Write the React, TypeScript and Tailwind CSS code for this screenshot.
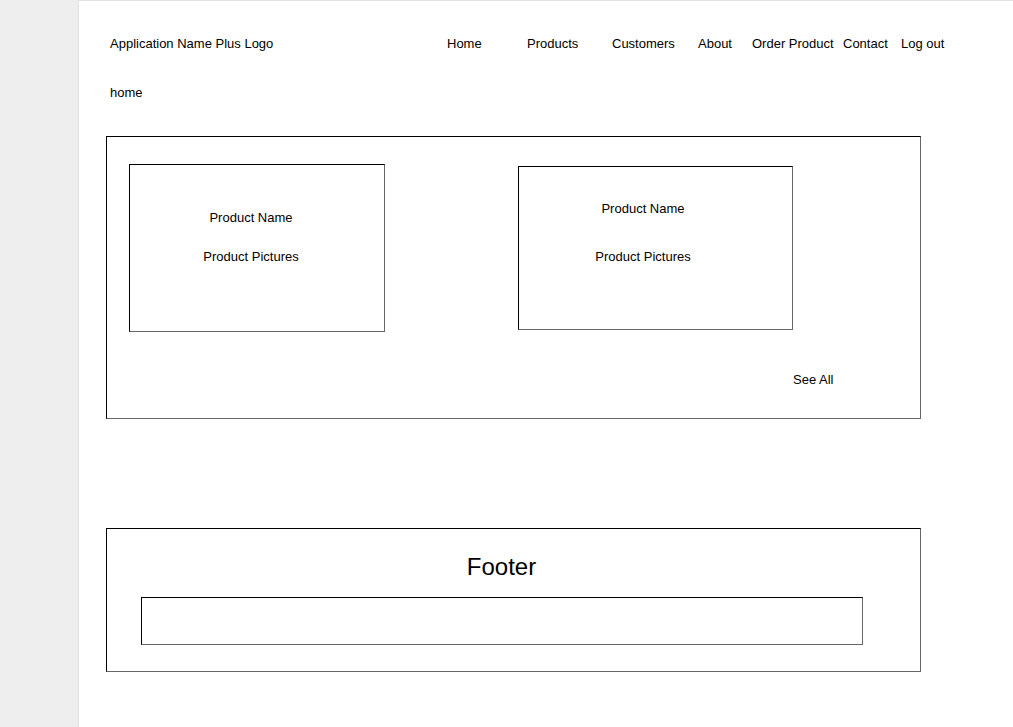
const NAV = [
  { label: "Home", w: "w-[80px]" },
  { label: "Products", w: "w-[85px]" },
  { label: "Customers", w: "w-[86px]" },
  { label: "About", w: "w-[54px]" },
  { label: "Order Product", w: "w-[91px]" },
  { label: "Contact", w: "w-[58px]" },
  { label: "Log out", w: "" },
];

const box = "border border-black border-r-[#666] border-b-[#666]";

export default function App() {
  return (
    <div className="flex h-[727px] overflow-hidden bg-white text-black text-[13px] leading-[16px] font-['Liberation_Sans',Arial,sans-serif]">
      {/* left gutter */}
      <div className="w-[78px] shrink-0 bg-[#eeeeee]" />

      <div className="flex-1 border-l border-t border-[#e2e2e2]">
        {/* Header */}
        <div className="flex pt-[35px] pl-[31px]">
          <span className="w-[337px]">Application Name Plus Logo</span>
          <nav className="flex">
            {NAV.map(n => (
              <span key={n.label} className={`${n.w} whitespace-nowrap`}>{n.label}</span>
            ))}
          </nav>
        </div>

        <div className="mt-[33px] pl-[31px]">home</div>

        {/* Products section */}
        <div className={`${box} ml-[27px] mt-[35px] w-[815px] h-[283px]`}>
          <div className="flex items-start pl-[22px] pt-[27px]">
            <div className={`${box} w-[256px] h-[168px] flex flex-col items-center pt-[45px] pr-[12px]`}>
              <span>Product Name</span>
              <span className="mt-[23px]">Product Pictures</span>
            </div>
            <div className={`${box} ml-[133px] mt-[2px] w-[275px] h-[164px] flex flex-col items-center pt-[34px] pr-[25px]`}>
              <span>Product Name</span>
              <span className="mt-[32px]">Product Pictures</span>
            </div>
          </div>
          <div className="mt-[40px] pl-[686px]">See All</div>
        </div>

        {/* Footer */}
        <div className={`${box} ml-[27px] mt-[109px] w-[815px] h-[144px] pt-[24px]`}>
          <div className="text-center text-[24px] leading-[28px] pr-[24px]">Footer</div>
          <div className={`${box} ml-[34px] mt-[16px] w-[722px] h-[48px]`} />
        </div>
      </div>
    </div>
  );
}
